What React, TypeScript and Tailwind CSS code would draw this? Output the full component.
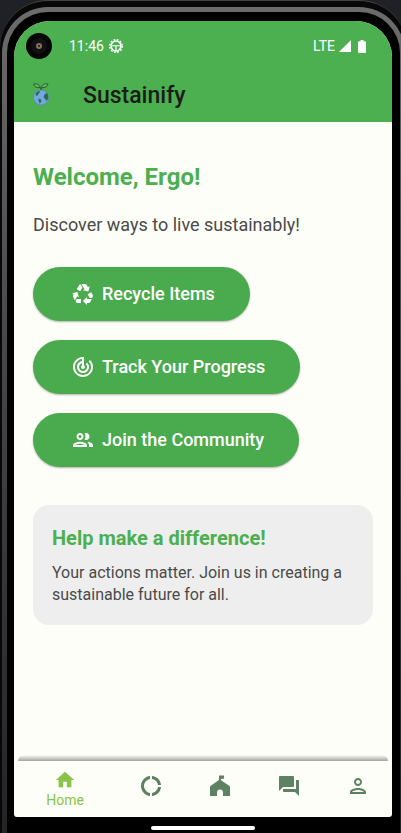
import React from "react";
import {
  MdHome,
  MdDonutLarge,
  MdForum,
  MdOutlinePerson,
  MdRecycling,
  MdTrackChanges,
} from "react-icons/md";

function GearIcon() {
  return (
    <svg viewBox="0 0 24 24" className="size-[14px]" fill="none" stroke="white" aria-hidden="true">
      <circle cx="12" cy="12" r="8.5" strokeWidth="2.8" />
      <circle cx="12" cy="12" r="10.8" strokeWidth="2.4" strokeDasharray="3.2 2.45" />
      <path d="M4 11.500h16M12 11.500V20" strokeWidth="2" />
    </svg>
  );
}

function SproutEarth() {
  return (
    <svg viewBox="0 0 18 24" className="h-6 w-[18px]" aria-hidden="true">
      <path d="M9 9.500C9 7 8.500 5.500 7.500 4.500M9 9c0-2 .8-3.500 2-4.500" stroke="#2c6a3b" strokeWidth="1.200" fill="none" />
      <path d="M1.500 2c3-.6 6 .2 6.500 3.400C4.600 6.200 2.300 5 1.500 2z" fill="#6bb04a" stroke="#22633a" strokeWidth="1" />
      <path d="M16 2c-3-.8-6 .2-6.300 3.400C13 6.200 15.400 5 16 2z" fill="#6bb04a" stroke="#22633a" strokeWidth="1" />
      <circle cx="9" cy="15.500" r="7.500" fill="#74a6e0" stroke="#5585bd" strokeWidth=".6" />
      <path d="M3.500 12c1-2 2.500-3 4-3l.4 1.600-1.600 1.200-.5 1.600-1.600.4zM12.500 12.500l2.500-1.500c1.200 1.500 1.600 4 1 6L14 19l-1-2.500-1.500-1zM6.500 16.500l2.800 1.200-.2 2.300-1.300 1.400-1.200-2.400z" fill="#2b6a4f" />
    </svg>
  );
}

function FlagHouse({ className }: { className?: string }) {
  return (
    <svg viewBox="0 0 24 24" className={className} fill="currentColor" aria-hidden="true">
      <path d="M11 6V1.500h5v3.200h-3V6.200l7.500 5c.9.600 1.500 1.200 1.500 2.300v8.500h-7V18.500a3 3 0 0 0-6 0V22H2v-8.500c0-1.100.6-1.700 1.500-2.300z" />
    </svg>
  );
}

function PeopleIcon({ className }: { className?: string }) {
  return (
    <svg viewBox="0 0 24 24" className={className} fill="currentColor" aria-hidden="true">
      <path d="M9 13.750c-2.340 0-7 1.170-7 3.500V19h14v-1.750c0-2.330-4.660-3.500-7-3.500zM4.340 17c.84-.58 2.870-1.250 4.660-1.250s3.820.67 4.660 1.250H4.340z" />
      <path d="M9 12c1.930 0 3.500-1.570 3.500-3.500S10.930 5 9 5 5.500 6.570 5.500 8.500 7.070 12 9 12zm0-5c.83 0 1.500.67 1.500 1.500S9.830 10 9 10s-1.500-.67-1.500-1.500S8.170 7 9 7z" />
      <path d="M16.040 13.810c1.160.84 1.960 1.960 1.960 3.440V19h4v-1.750c0-2.020-3.500-3.170-5.960-3.440z" />
      <path d="M15 12c1.930 0 3.500-1.570 3.500-3.500S16.930 5 15 5c-.54 0-1.040.13-1.500.35.63.89 1 1.980 1 3.150s-.37 2.260-1 3.150c.46.22.96.35 1.500.35z" />
    </svg>
  );
}

function StatusBar() {
  return (
    <div className="flex h-[50px] items-center pl-3 pr-[26px] text-sm text-white">
      <div className="flex size-[26px] items-center justify-center rounded-full bg-[#060606]">
        <div className="flex size-4 items-center justify-center rounded-full bg-[#111]">
          <div className="size-[6px] rounded-full bg-[#8a7060] p-[2px]">
            <div className="size-[2px] rounded-full bg-[#151010]" />
          </div>
        </div>
      </div>
      <span className="ml-[17px]">11:46</span>
      <span className="ml-[5px]"><GearIcon /></span>
      <span className="ml-auto">LTE</span>
      <svg viewBox="0 0 12 12" className="ml-1 size-3" fill="white" aria-hidden="true">
        <path d="M12 0v12H0z" />
      </svg>
      <svg viewBox="0 0 8 13" className="ml-[7px] h-[13px] w-2" fill="white" aria-hidden="true">
        <path d="M2.500 0h3v1.300H7a1 1 0 0 1 1 1V12a1 1 0 0 1-1 1H1a1 1 0 0 1-1-1V2.300a1 1 0 0 1 1-1h1.500z" />
      </svg>
    </div>
  );
}

const actions = [
  { label: "Recycle Items", Icon: MdRecycling },
  { label: "Track Your Progress", Icon: MdTrackChanges },
  { label: "Join the Community", Icon: PeopleIcon },
];

const tabs = [
  { label: "Progress", href: "#progress", Icon: MdDonutLarge },
  { label: "Community", href: "#community", Icon: FlagHouse },
  { label: "Chat", href: "#chat", Icon: MdForum },
  { label: "Profile", href: "#profile", Icon: MdOutlinePerson },
];

export default function App() {
  return (
    <div className="h-screen overflow-hidden bg-[#202127] font-[Roboto,sans-serif]">
      <div className="-mr-[6px] flex h-full flex-col rounded-t-[48px] border-t border-[#444] bg-[#080808] px-[2px] pt-[6px]">
        <div className="flex min-h-0 flex-1 flex-col rounded-t-[46px] bg-linear-to-b from-[#6c6c6c] via-[#484848] via-40% to-[#242424] px-[5px] pt-[5px]">
          <div className="flex min-h-0 flex-1 flex-col rounded-t-[41px] bg-black pl-[7px] pr-2 pt-[9px]">
            <div className="flex min-h-0 flex-1 flex-col overflow-hidden rounded-t-[36px] rounded-b-[3px] bg-[#fdfef7]">
              <header className="bg-[#4caf50]">
                <StatusBar />
                <div className="flex h-[51px] items-center gap-[33px] pl-[18px]">
                  <div className="pb-[6px]">
                    <SproutEarth />
                  </div>
                  <h1 className="text-[23px] font-medium text-[#1a1c18]">Sustainify</h1>
                </div>
              </header>

              <main className="flex flex-1 flex-col items-start px-[19px] pt-[39px]">
                <h2 className="text-2xl font-bold text-[#4caf50]">Welcome, Ergo!</h2>
                <p className="mt-[18px] text-lg text-[#4a4a4a]">Discover ways to live sustainably!</p>
                <div className="mt-7 flex flex-col items-start gap-[19px]">
                  {actions.map(({ label, Icon }) => (
                    <button
                      key={label}
                      type="button"
                      className="flex h-[54px] items-center gap-[7px] rounded-full bg-[#49ab4d] pl-[38px] pr-[35px] text-lg font-medium text-white shadow-[0_1px_2px_rgba(0,0,0,0.3)]"
                    >
                      <Icon className="size-6" aria-hidden="true" />
                      {label}
                    </button>
                  ))}
                </div>
                <section className="mt-[38px] w-full rounded-2xl bg-[#eeeeee] p-[19px]">
                  <h3 className="text-xl font-bold text-[#4caf50]">Help make a difference!</h3>
                  <p className="mt-[10px] text-base leading-[22px] text-[#4a4a4a]">
                    Your actions matter. Join us in creating a sustainable future for all.
                  </p>
                </section>
              </main>

              <div className="mx-1 h-[6px] rounded-t-full bg-linear-to-b from-[#fdfef7] to-[#a4a4a0]" />
              <nav className="grid h-14 grid-cols-[102px_repeat(4,1fr)] items-center text-[#5d8163]">
                <a href="#home" className="flex flex-col items-center text-sm leading-[18px] text-[#8bc34a]">
                  <MdHome className="size-[22px]" aria-hidden="true" />
                  Home
                </a>
                {tabs.map(({ label, href, Icon }) => (
                  <a key={label} href={href} aria-label={label} className="flex justify-center pb-[6px]">
                    <Icon className="size-6" />
                  </a>
                ))}
              </nav>
            </div>
            <div className="flex h-4 items-end justify-center pb-[3px]">
              <div className="h-1 w-[104px] rounded-full bg-white" />
            </div>
          </div>
        </div>
      </div>
    </div>
  );
}
